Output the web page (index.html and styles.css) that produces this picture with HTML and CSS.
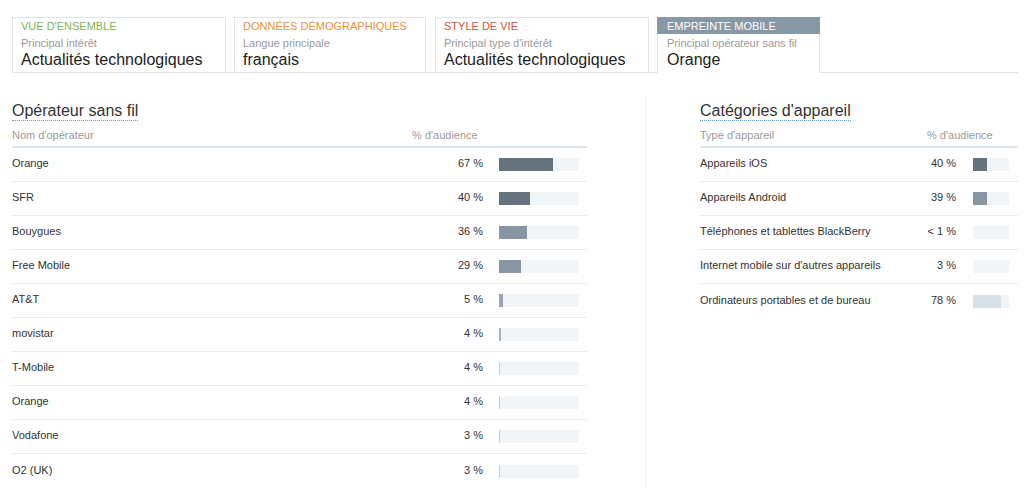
FILE: index.html
```html
<!DOCTYPE html>
<html lang="fr">
<head>
<meta charset="utf-8">
<title>Empreinte mobile</title>
<link rel="stylesheet" href="styles.css">
</head>
<body>
<div class="tabs">
  <div class="tab tab-1">
    <div class="tab-label green">VUE D'ENSEMBLE</div>
    <div class="tab-sub">Principal intérêt</div>
    <div class="tab-value">Actualités technologiques</div>
  </div>
  <div class="tab tab-2">
    <div class="tab-label orange">DONNÉES DÉMOGRAPHIQUES</div>
    <div class="tab-sub">Langue principale</div>
    <div class="tab-value">français</div>
  </div>
  <div class="tab tab-3">
    <div class="tab-label red">STYLE DE VIE</div>
    <div class="tab-sub">Principal type d'intérêt</div>
    <div class="tab-value">Actualités technologiques</div>
  </div>
  <div class="tab tab-4 active">
    <div class="tab-band">EMPREINTE MOBILE</div>
    <div class="tab-sub">Principal opérateur sans fil</div>
    <div class="tab-value">Orange</div>
  </div>
</div>

<div class="main">
  <section class="panel panel-left">
    <h2 class="heading">Opérateur sans fil</h2>
    <div class="table left">
      <div class="row head"><span class="name">Nom d'opérateur</span><span class="pct">% d'audience</span><span></span></div>
      <div class="row"><span class="name">Orange</span><span class="pct">67 %</span><span class="bar"><span class="fill dark" style="width:53.6px"></span></span></div>
      <div class="row"><span class="name">SFR</span><span class="pct">40 %</span><span class="bar"><span class="fill dark" style="width:31px"></span></span></div>
      <div class="row"><span class="name">Bouygues</span><span class="pct">36 %</span><span class="bar"><span class="fill mid" style="width:28px"></span></span></div>
      <div class="row"><span class="name">Free Mobile</span><span class="pct">29 %</span><span class="bar"><span class="fill mid" style="width:22px"></span></span></div>
      <div class="row"><span class="name">AT&amp;T</span><span class="pct">5 %</span><span class="bar"><span class="fill mid2" style="width:4px"></span></span></div>
      <div class="row"><span class="name">movistar</span><span class="pct">4 %</span><span class="bar"><span class="fill soft" style="width:2px"></span></span></div>
      <div class="row"><span class="name">T-Mobile</span><span class="pct">4 %</span><span class="bar"><span class="fill faint" style="width:1px"></span></span></div>
      <div class="row"><span class="name">Orange</span><span class="pct">4 %</span><span class="bar"><span class="fill faint" style="width:1px"></span></span></div>
      <div class="row"><span class="name">Vodafone</span><span class="pct">3 %</span><span class="bar"><span class="fill faint" style="width:1px"></span></span></div>
      <div class="row"><span class="name">O2 (UK)</span><span class="pct">3 %</span><span class="bar"><span class="fill faint" style="width:1px"></span></span></div>
    </div>
  </section>
  <div class="divider"></div>
  <section class="panel panel-right">
    <h2 class="heading">Catégories d'appareil</h2>
    <div class="table right">
      <div class="row head"><span class="name">Type d'appareil</span><span class="pct">% d'audience</span><span></span></div>
      <div class="row"><span class="name">Appareils iOS</span><span class="pct">40 %</span><span class="bar"><span class="fill dark" style="width:14px"></span></span></div>
      <div class="row"><span class="name">Appareils Android</span><span class="pct">39 %</span><span class="bar"><span class="fill mid" style="width:14px"></span></span></div>
      <div class="row"><span class="name">Téléphones et tablettes BlackBerry</span><span class="pct">&lt; 1 %</span><span class="bar"></span></div>
      <div class="row"><span class="name">Internet mobile sur d'autres appareils</span><span class="pct">3 %</span><span class="bar"></span></div>
      <div class="row"><span class="name">Ordinateurs portables et de bureau</span><span class="pct">78 %</span><span class="bar"><span class="fill light" style="width:28px"></span></span></div>
    </div>
  </section>
</div>
</body>
</html>
```

FILE: styles.css
```css
* { box-sizing: border-box; }

html, body {
  margin: 0;
  padding: 0;
  background: #ffffff;
  font-family: "Liberation Sans", Arial, sans-serif;
  color: #333;
}

body {
  padding: 17px 6px 0 12px;
}

/* ---------- tabs ---------- */
.tabs {
  display: flex;
  gap: 8px;
  border-bottom: 1px solid #dfe4e8;
  height: 56px;
}

.tab {
  height: 56px;
  border: 1px solid #dfe4e8;
  background: #fff;
  padding: 0 8px;
}

.tab-1 { width: 214px; }
.tab-2 { width: 192px; }
.tab-3 { width: 214px; margin-left: 1px; }
.tab-4 { width: 163px; }

.tab.active {
  border-bottom-color: #fff;
  padding: 0;
}

.tab-label {
  font-size: 11px;
  line-height: 14px;
  padding-top: 1px;
}

.tab-label.green { color: #7fb453; }
.tab-label.orange { color: #e8923c; }
.tab-label.red { color: #c9553f; }

.tab-band {
  margin: -1px -1px 0 -1px;
  background: #8898a5;
  color: #fff;
  font-size: 11px;
  line-height: 16px;
  height: 17px;
  padding: 1px 10px 0 10px;
}

.tab-sub {
  font-size: 11px;
  line-height: 14px;
  color: #9a9a9a;
  margin-top: 3px;
}

.tab.active .tab-sub,
.tab.active .tab-value {
  padding-left: 9px;
}

.tab.active .tab-sub { margin-top: 2px; }

.tab-value {
  font-size: 16px;
  line-height: 18px;
  color: #222;
  padding-top: 1px;
}

/* ---------- main ---------- */
.main {
  display: flex;
  margin-top: 27px;
  height: 386px;
}

.panel-left { width: 575px; }
.panel-right { width: 318px; }

.divider {
  width: 1px;
  background: #efefef;
  margin: -2px 54px 0 58px;
}

.heading {
  display: inline-block;
  margin: 2px 0 0 0;
  font-size: 16px;
  line-height: 18px;
  font-weight: normal;
  color: #333;
  border-bottom: 1px dotted #5f9cc2;
}

.table { display: flex; flex-direction: column; }

.row {
  display: grid;
  align-items: center;
  font-size: 11px;
  line-height: 14px;
  color: #333;
  height: 34px;
  border-bottom: 1px solid #e9edf0;
}

.row:last-child { border-bottom: none; }

.table.left .row { grid-template-columns: 400px 71px 16px 80px 8px; }
.table.right .row { grid-template-columns: 227px 29px 17px 36px 9px; }

.row > .name { grid-column: 1; white-space: nowrap; padding-bottom: 3px; }
.row > .pct { grid-column: 2; text-align: right; white-space: nowrap; padding-bottom: 3px; }
.row > .bar { grid-column: 4; }

.row.head {
  height: 27px;
  color: #9a9a9a;
  border-bottom: 2px solid #dce3e9;
  padding-top: 2px;
}

.row.head > .name,
.row.head > .pct { padding-bottom: 0; }

.row.head .pct { text-align: left; }

.bar {
  display: block;
  height: 13px;
  background: #f2f5f8;
}

.fill {
  display: block;
  height: 13px;
}

.fill.dark { background: #66727e; }
.fill.mid { background: #8896a3; }
.fill.mid2 { background: #9ba6b0; }
.fill.soft { background: #aab4bc; }
.fill.faint { background: #c6ced5; }
.fill.light { background: #d6dee6; }
```
